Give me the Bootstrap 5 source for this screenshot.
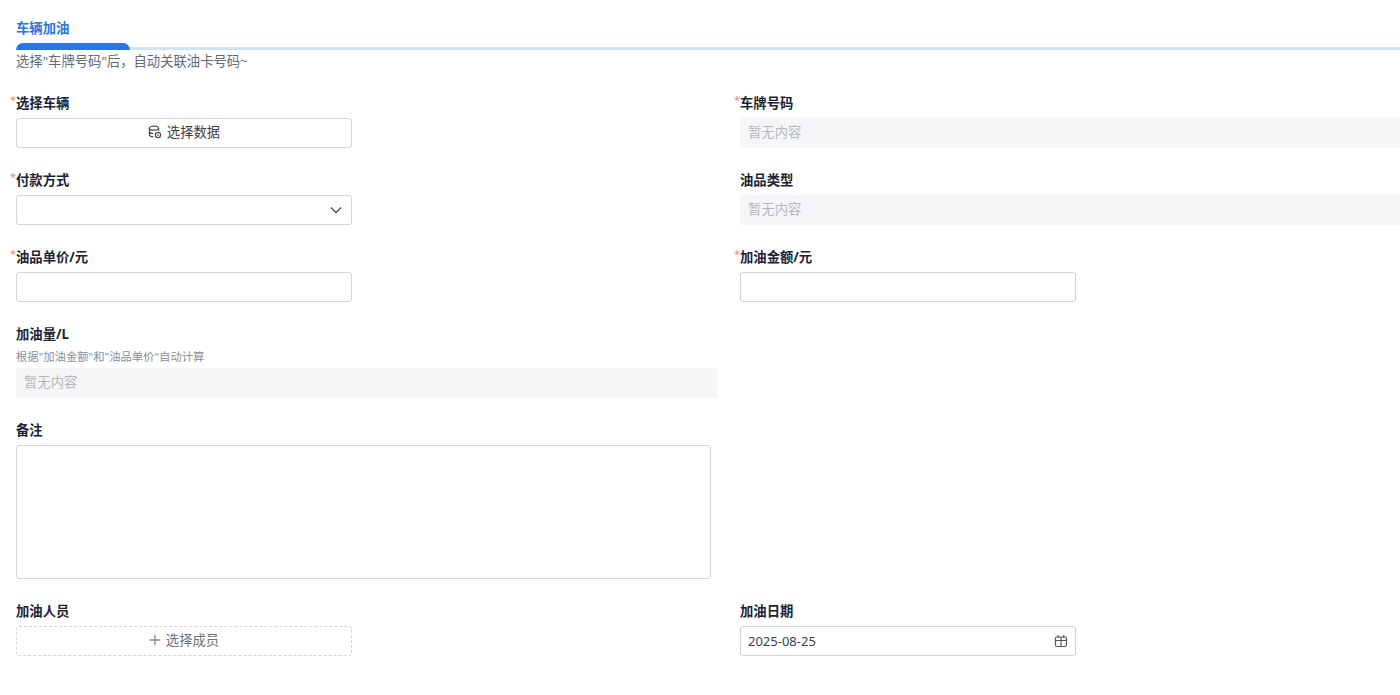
<!DOCTYPE html>
<html lang="zh-CN">
<head>
<meta charset="utf-8">
<title>车辆加油</title>
<link href="https://cdn.jsdelivr.net/npm/bootstrap@5.3.0/dist/css/bootstrap.min.css" rel="stylesheet">
<style>
html, body { height: 100%; overflow: hidden; }
body { background: #fff; color: #1f2329; font-family: "Noto Sans", "Noto Sans CJK SC", sans-serif; font-size: 13.33px; line-height: 20px; }
.page-wrap { padding: 18px 0 0 16px; width: 1400px; overflow: hidden; }
.tab-title { color: #2a75e0; font-weight: 700; height: 25px; line-height: 20px; }
.tab-rail { height: 7px; margin-left: -16px; padding-left: 16px; display: flex; align-items: flex-end; }
.tab-rail-line { height: 3px; background: #d0e2fa; flex: 1; }
.tab-rail-on { width: 114px; height: 7px; background: #2a75e0; border-radius: 7px 7px 0 0; }
.tab-hint { color: #646a73; height: 20px; margin-bottom: 22px; margin-top: 1px; }
.form-cols { display: grid; grid-template-columns: 701px 701px; column-gap: 23px; row-gap: 22px; width: 1425px; }
.fld-label { display: block; position: relative; font-weight: 700; color: #1a2233; height: 20px; line-height: 20px; margin-bottom: 5px; }
.fld-label-sub { margin-bottom: 6px; }
.fld-req::before { content: "*"; position: absolute; left: -6px; top: 0; color: #ec8a8c; font-weight: 400; font-size: 11px; line-height: 14px; }
.fld-sub { color: #8a8f99; font-size: 11.33px; line-height: 14px; height: 14px; margin: 0 0 4px; }
.fld-box { width: 336px; height: 30px; border: 1px solid #d3d5d9; border-radius: 3px; background-color: #fff; padding: 0 8px; font-size: 13.33px; line-height: 28px; color: #1f2329; box-shadow: none; min-height: 0; }
.fld-btn { color: #3b4048; display: flex; align-items: center; justify-content: center; gap: 5px; padding-bottom: 2px; }
.fld-btn:hover { background: #fff; border-color: #d3d5d9; color: #3b4048; }
.fld-dash { border: 1px dashed #d3d5d9; color: #6b7079; }
.fld-ro { height: 30px; background: #f5f6f8; border-radius: 2px; color: #b5b8bd; padding: 0 8px; line-height: 29px; }
.fld-area { width: 695px; height: 134px; resize: none; }
.fld-date { display: flex; align-items: center; justify-content: space-between; padding-right: 7px; padding-left: 7px; color: #3b4048; font-size: 13px; }
.fld-select { display: flex; align-items: center; justify-content: flex-end; padding-right: 8px; }
.gap-empty { min-height: 0; }
</style>
</head>
<body>
<div class="page-wrap">
  <div class="tab-title">车辆加油</div>
  <div class="tab-rail"><div class="tab-rail-on"></div><div class="tab-rail-line"></div></div>
  <div class="tab-hint">选择"车牌号码"后，自动关联油卡号码~</div>
  <div class="form-cols">
    <div>
      <label class="fld-label fld-req">选择车辆</label>
      <button type="button" class="btn fld-box fld-btn">
        <svg width="14" height="14" viewBox="0 0 14 14" fill="none" stroke="#4a4f57" stroke-width="1.2"><ellipse cx="6" cy="3.2" rx="4.6" ry="2"/><path d="M1.4 3.2v6.6c0 1.1 1.8 2 4 2M10.6 3.2v2.6M1.4 6.5c0 1.1 1.8 2 4 2"/><circle cx="10" cy="10" r="2.6"/><path d="M9 10h2"/></svg>
        <span>选择数据</span>
      </button>
    </div>
    <div>
      <label class="fld-label fld-req">车牌号码</label>
      <div class="fld-ro">暂无内容</div>
    </div>
    <div>
      <label class="fld-label fld-req">付款方式</label>
      <div class="fld-box fld-select">
        <svg width="14" height="14" viewBox="0 0 14 14" fill="none" stroke="#4a4f57" stroke-width="1.3"><path d="M2 4.5 7 9.5 12 4.5"/></svg>
      </div>
    </div>
    <div>
      <label class="fld-label">油品类型</label>
      <div class="fld-ro">暂无内容</div>
    </div>
    <div>
      <label class="fld-label fld-req">油品单价/元</label>
      <input type="text" class="form-control fld-box">
    </div>
    <div>
      <label class="fld-label fld-req">加油金额/元</label>
      <input type="text" class="form-control fld-box">
    </div>
    <div>
      <label class="fld-label fld-label-sub">加油量/L</label>
      <div class="fld-sub">根据"加油金额"和"油品单价"自动计算</div>
      <div class="fld-ro">暂无内容</div>
    </div>
    <div class="gap-empty"></div>
    <div>
      <label class="fld-label">备注</label>
      <textarea class="form-control fld-box fld-area"></textarea>
    </div>
    <div class="gap-empty"></div>
    <div>
      <label class="fld-label">加油人员</label>
      <button type="button" class="btn fld-box fld-btn fld-dash">
        <svg width="12" height="12" viewBox="0 0 12 12" fill="none" stroke="#85898f" stroke-width="1.3"><path d="M6 .8v10.4M.8 6h10.4"/></svg>
        <span>选择成员</span>
      </button>
    </div>
    <div>
      <label class="fld-label">加油日期</label>
      <div class="fld-box fld-date">
        <span>2025-08-25</span>
        <svg width="14" height="14" viewBox="0 0 14 14" fill="none" stroke="#55595f" stroke-width="1.2"><rect x="1.5" y="3" width="11" height="9.5" rx="1.2"/><path d="M1.5 6.5h11M7 3v9.5M4.2 1v3M9.8 1v3"/></svg>
      </div>
    </div>
  </div>
</div>
<script src="https://cdn.jsdelivr.net/npm/bootstrap@5.3.0/dist/js/bootstrap.bundle.min.js"></script>
</body>
</html>
